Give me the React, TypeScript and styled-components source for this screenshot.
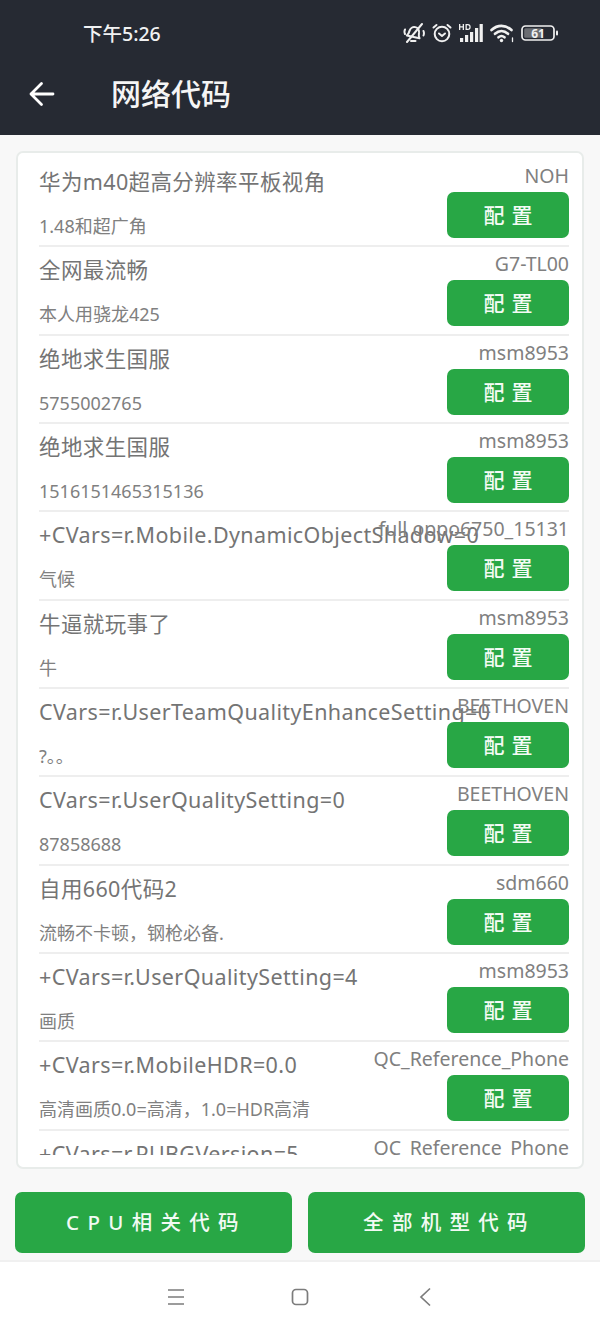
import React from "react";
import styled, { createGlobalStyle } from "styled-components";

const Global = createGlobalStyle`
  html, body { margin: 0; padding: 0; background: #f8f8f8; }
  * { box-sizing: border-box; }
  body { font-family: "Noto Sans", "Noto Sans CJK SC", sans-serif; }
`;

const Page = styled.div`
  width: 600px;
  height: 1333px;
  display: flex;
  flex-direction: column;
  overflow: hidden;
  background: #f8f8f8;
`;

const Header = styled.header`
  height: 135px;
  flex: none;
  background: #262a33;
  color: #fff;
  display: flex;
  flex-direction: column;
`;

const StatusBar = styled.div`
  height: 65px;
  flex: none;
  padding: 0 41px 0 83px;
  display: flex;
  align-items: center;
  justify-content: space-between;
`;

const Clock = styled.span`
  font-size: 19.5px;
  font-weight: 500;
  color: #f0f1f2;
`;

const StatusIcons = styled.div`
  display: flex;
  align-items: center;
  gap: 7px;
`;

const TitleBar = styled.div`
  flex: 1;
  display: flex;
  align-items: center;
  padding: 0 0 12px 29px;
`;

const Title = styled.h1`
  margin: 0 0 0 56px;
  font-size: 30px;
  font-weight: 500;
  line-height: 1;
  color: #f5f5f5;
`;

const Card = styled.section`
  margin: 16px 16px 0;
  height: 1018px;
  background: #fff;
  border: 2px solid #e8ecea;
  border-radius: 7px;
  padding: 0 13px 13px 21px;
  flex: none;
`;

const List = styled.div`
  height: 1002px;
  padding-top: 6px;
  overflow: hidden;
`;

const Row = styled.div`
  height: 88.33px;
  flex: none;
  border-bottom: 2px solid #eeeeee;
  display: grid;
  grid-template-columns: minmax(0, 1fr) 122px;
  color: #757575;
`;

const Main = styled.div`
  padding-top: 8px;
  min-width: 0;
  white-space: nowrap;
`;

const RowTitle = styled.div`
  font-size: 21.5px;
  line-height: 30px;
  letter-spacing: 0.38px;
  color: #747474;
`;

const Sub = styled.div`
  margin-top: 17px;
  font-size: 18px;
  line-height: 24px;
  color: #808080;
`;

const Side = styled.div`
  display: flex;
  flex-direction: column;
  align-items: flex-end;
  white-space: nowrap;
`;

const Model = styled.div`
  height: 33px;
  padding-top: 4px;
  font-size: 19.5px;
  line-height: 26px;
  color: #808080;
`;

const ConfigButton = styled.button`
  width: 122px;
  height: 46px;
  flex: none;
  border: 0;
  border-radius: 7px;
  background: #28a745;
  color: #f4fbf5;
  font: 500 21px/44px "Noto Sans CJK SC", sans-serif;
  letter-spacing: 7px;
  text-indent: 7px;
  padding: 0 0 3px;
`;

const Actions = styled.div`
  margin: 23px 15px 0 15px;
  display: grid;
  grid-template-columns: 277px 277px;
  gap: 16px;
  flex: none;
`;

const ActionButton = styled.button`
  height: 61px;
  border: 0;
  border-radius: 7px;
  background: #28a745;
  color: #f2faf4;
  font: 500 20.5px "Noto Sans", "Noto Sans CJK SC", sans-serif;
  letter-spacing: 8.3px;
  text-indent: 6px;
  padding: 0 0 4px;
`;

const NavBar = styled.nav`
  margin-top: 7px;
  flex: 1;
  background: #fff;
  border-top: 2px solid #f0f0f0;
  display: flex;
  align-items: center;
  justify-content: center;
  gap: 106px;
  padding-bottom: 2px;
  color: #7c7c7c;
`;

const rows: [string, string, string][] = [
  ["华为m40超高分辨率平板视角", "1.48和超广角", "NOH"],
  ["全网最流畅", "本人用骁龙425", "G7-TL00"],
  ["绝地求生国服", "5755002765", "msm8953"],
  ["绝地求生国服", "1516151465315136", "msm8953"],
  ["+CVars=r.Mobile.DynamicObjectShadow=0", "气候", "full oppo6750_15131"],
  ["牛逼就玩事了", "牛", "msm8953"],
  ["CVars=r.UserTeamQualityEnhanceSetting=0", "?。。", "BEETHOVEN"],
  ["CVars=r.UserQualitySetting=0", "87858688", "BEETHOVEN"],
  ["自用660代码2", "流畅不卡顿，钢枪必备.", "sdm660"],
  ["+CVars=r.UserQualitySetting=4", "画质", "msm8953"],
  ["+CVars=r.MobileHDR=0.0", "高清画质0.0=高清，1.0=HDR高清", "QC_Reference_Phone"],
  ["+CVars=r.PUBGVersion=5", "", "QC_Reference_Phone"],
];

const BackArrow = () => (
  <svg width="26" height="26" viewBox="0 0 26 26" fill="none" stroke="#fff" strokeWidth="2.8" strokeLinecap="round" strokeLinejoin="round">
    <path d="M2 13h22M12.500 2.500 2 13l10.500 10.500" />
  </svg>
);

const MuteIcon = () => (
  <svg width="22" height="22" viewBox="0 0 22 22" fill="none" stroke="#f0f0f0" strokeWidth="2" strokeLinecap="round" strokeLinejoin="round">
    <path transform="rotate(12 11 11)" d="M4.500 15c1.400-1.600 1.600-3.500 1.700-5.400C6.400 7 8.400 5 11 5s4.600 2 4.800 4.600c.1 1.900.3 3.800 1.700 5.400z" />
    <path d="M8 19h4.500M19 2 4 20M2 7.500c-.7 1.500-.7 3 0 4.500M20.500 9c.6 1.500.6 3 0 4.500" />
  </svg>
);

const AlarmIcon = () => (
  <svg width="20" height="20" viewBox="0 0 20 20" fill="none" stroke="#f0f0f0" strokeWidth="2" strokeLinecap="round" strokeLinejoin="round">
    <circle cx="10" cy="11" r="7.300" />
    <path d="M7 10.500l3 2.500 3-2.500M1.500 4.500 4.500 2M18.500 4.500 15.500 2" />
  </svg>
);

const SignalIcon = () => (
  <svg width="24" height="20" viewBox="0 0 24 20" fill="#f0f0f0">
    <rect x="1" y="15" width="3.200" height="4" />
    <rect x="6" y="12" width="3.200" height="7" />
    <rect x="11" y="9" width="3.200" height="10" />
    <rect x="16" y="5" width="3.200" height="14" />
    <rect x="20.600" y="1" width="3.200" height="18" />
    <path d="M0 1h1.300v2.300h2.400V1H5v6H3.700V4.500H1.300V7H0zM6.500 1h2.300c1.900 0 2.900 1.200 2.900 3s-1 3-2.900 3H6.500zm1.300 1.200v3.600h1c1.100 0 1.600-.7 1.600-1.800s-.5-1.800-1.600-1.800z" />
  </svg>
);

const WifiIcon = () => (
  <svg width="24" height="20" viewBox="0 0 24 20" fill="none" stroke="#f0f0f0" strokeWidth="2.600" strokeLinecap="round">
    <path d="M1.500 7C7.500 1.500 15.500 1.500 21.500 7M5 10.800c4-3.600 9-3.600 13 0M8.500 14.300c2-1.700 4-1.700 6 0" />
    <circle cx="11.500" cy="17.500" r="1.700" fill="#f0f0f0" stroke="none" />
    <path d="M22.500 15v3.500" strokeWidth="1.300" />
  </svg>
);

const BatteryIcon = () => (
  <svg width="38" height="18" viewBox="0 0 38 18">
    <rect x="1" y="2" width="32" height="14" rx="3.500" fill="none" stroke="#f0f0f0" strokeWidth="1.700" />
    <rect x="3.200" y="4.200" width="18" height="9.600" rx="1.500" fill="#6b6d72" />
    <rect x="35" y="6.500" width="2" height="5" rx="1" fill="#f0f0f0" />
    <text x="17" y="14" textAnchor="middle" fontSize="12" fontWeight="700" fontFamily="Noto Sans" fill="#f0f0f0">61</text>
  </svg>
);

const MenuIcon = () => (
  <svg width="18" height="18" viewBox="0 0 18 18" fill="none" stroke="currentColor" strokeWidth="1.7">
    <path d="M1 2h16M1 9h16M1 16h16" />
  </svg>
);

const HomeIcon = () => (
  <svg width="18" height="18" viewBox="0 0 18 18" fill="none" stroke="currentColor" strokeWidth="1.7">
    <rect x="1.500" y="1.500" width="15" height="15" rx="3.500" />
  </svg>
);

const BackIcon = () => (
  <svg width="18" height="20" viewBox="0 0 18 20" fill="none" stroke="currentColor" strokeWidth="1.7">
    <path d="M15 1.500 6 10l9 8.500" />
  </svg>
);

export default function App() {
  return (
    <Page>
      <Global />
      <Header>
        <StatusBar>
          <Clock>下午5:26</Clock>
          <StatusIcons>
            <MuteIcon />
            <AlarmIcon />
            <SignalIcon />
            <WifiIcon />
            <BatteryIcon />
          </StatusIcons>
        </StatusBar>
        <TitleBar>
          <BackArrow />
          <Title>网络代码</Title>
        </TitleBar>
      </Header>
      <Card>
        <List>
          {rows.map(([title, sub, model], i) => (
            <Row key={i}>
              <Main>
                <RowTitle>{title}</RowTitle>
                <Sub>{sub}</Sub>
              </Main>
              <Side>
                <Model>{model}</Model>
                <ConfigButton>配置</ConfigButton>
              </Side>
            </Row>
          ))}
        </List>
      </Card>
      <Actions>
        <ActionButton>CPU相关代码</ActionButton>
        <ActionButton>全部机型代码</ActionButton>
      </Actions>
      <NavBar>
        <MenuIcon />
        <HomeIcon />
        <BackIcon />
      </NavBar>
    </Page>
  );
}
